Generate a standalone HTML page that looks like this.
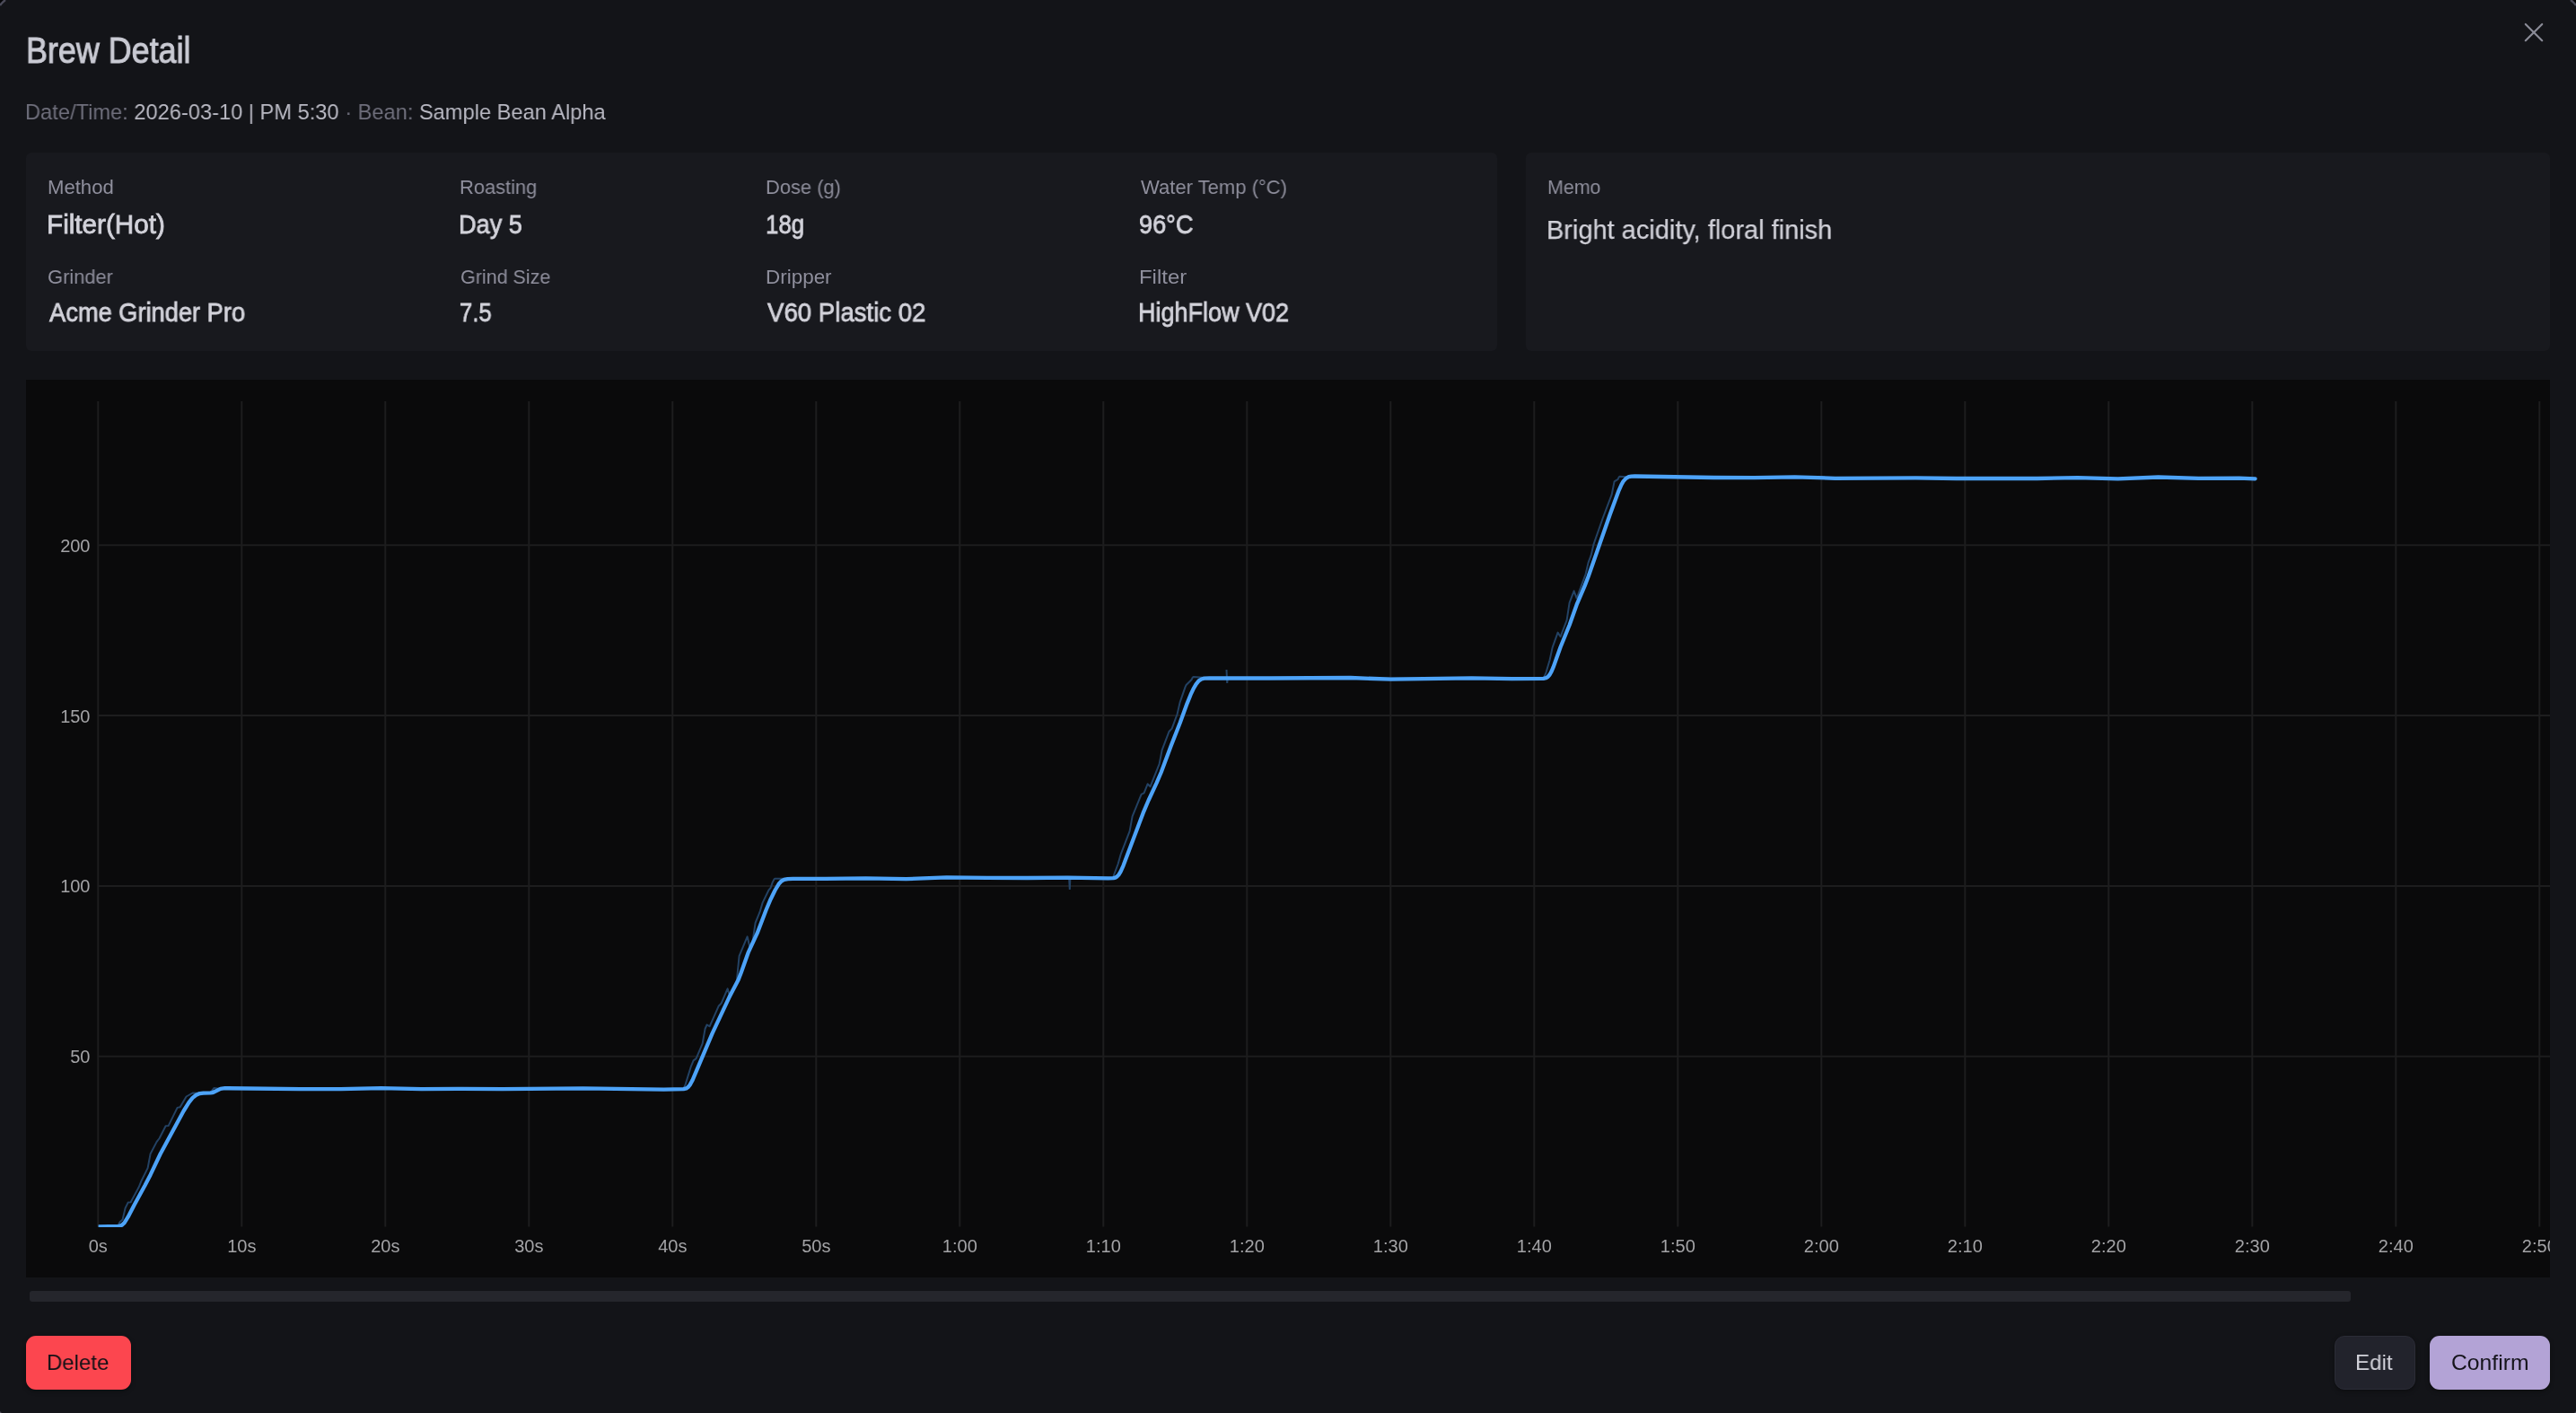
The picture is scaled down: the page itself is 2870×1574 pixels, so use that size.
<!DOCTYPE html>
<html><head><meta charset="utf-8"><style>
html,body{margin:0;padding:0;}
body{width:2870px;height:1574px;background:#131418;position:relative;overflow:hidden;font-family:"Liberation Sans",sans-serif;}
.t{position:absolute;white-space:nowrap;line-height:1;transform-origin:0 50%;will-change:transform;}
.card{position:absolute;background:#18191e;border-radius:6px;}
.chartbg{position:absolute;left:29px;top:423px;width:2812px;height:999.5px;background:#0a0a0b;}
.chart{position:absolute;left:0;top:0;}
.scroll{position:absolute;left:33px;top:1438px;width:2586px;height:12px;background:#25262c;border-radius:3px;}
.btn{position:absolute;top:1488px;height:60px;border-radius:11px;box-sizing:border-box;box-shadow:0 2px 5px rgba(0,0,0,0.35);}
</style></head><body>
<div class="card" style="left:29px;top:170px;width:1639.3px;height:220.8px"></div>
<div class="card" style="left:1700.2px;top:170px;width:1140.8px;height:220.8px"></div>
<div class="chartbg"></div>
<div class="scroll"></div>
<div class="btn" style="left:29px;width:117px;background:#fc464f"></div>
<div class="btn" style="left:2601.2px;width:89.4px;background:#22232c;border:1.5px solid #2b2c36"></div>
<div class="btn" style="left:2707px;width:134px;background:#b3a3d6"></div>
<svg class="chart" style="will-change:transform" width="2870" height="1574" viewBox="0 0 2870 1574">
<defs><clipPath id="cc"><rect x="29" y="423" width="2812" height="999.5"/></clipPath></defs>
<g clip-path="url(#cc)">
<g stroke="#1d1d1e" stroke-width="2" fill="none"><line x1="109.3" y1="447" x2="109.3" y2="1366.5"/><line x1="269.3" y1="447" x2="269.3" y2="1366.5"/><line x1="429.3" y1="447" x2="429.3" y2="1366.5"/><line x1="589.3" y1="447" x2="589.3" y2="1366.5"/><line x1="749.3" y1="447" x2="749.3" y2="1366.5"/><line x1="909.3" y1="447" x2="909.3" y2="1366.5"/><line x1="1069.3" y1="447" x2="1069.3" y2="1366.5"/><line x1="1229.3" y1="447" x2="1229.3" y2="1366.5"/><line x1="1389.3" y1="447" x2="1389.3" y2="1366.5"/><line x1="1549.3" y1="447" x2="1549.3" y2="1366.5"/><line x1="1709.3" y1="447" x2="1709.3" y2="1366.5"/><line x1="1869.3" y1="447" x2="1869.3" y2="1366.5"/><line x1="2029.3" y1="447" x2="2029.3" y2="1366.5"/><line x1="2189.3" y1="447" x2="2189.3" y2="1366.5"/><line x1="2349.3" y1="447" x2="2349.3" y2="1366.5"/><line x1="2509.3" y1="447" x2="2509.3" y2="1366.5"/><line x1="2669.3" y1="447" x2="2669.3" y2="1366.5"/><line x1="2829.3" y1="447" x2="2829.3" y2="1366.5"/><line x1="109.3" y1="1176.7" x2="2841" y2="1176.7"/><line x1="109.3" y1="986.9" x2="2841" y2="986.9"/><line x1="109.3" y1="797.1" x2="2841" y2="797.1"/><line x1="109.3" y1="607.3" x2="2841" y2="607.3"/></g>
<g fill="#a3a3a6" font-family="Liberation Sans, sans-serif" font-size="20px"><text x="109.3" y="1395" text-anchor="middle">0s</text><text x="269.3" y="1395" text-anchor="middle">10s</text><text x="429.3" y="1395" text-anchor="middle">20s</text><text x="589.3" y="1395" text-anchor="middle">30s</text><text x="749.3" y="1395" text-anchor="middle">40s</text><text x="909.3" y="1395" text-anchor="middle">50s</text><text x="1069.3" y="1395" text-anchor="middle">1:00</text><text x="1229.3" y="1395" text-anchor="middle">1:10</text><text x="1389.3" y="1395" text-anchor="middle">1:20</text><text x="1549.3" y="1395" text-anchor="middle">1:30</text><text x="1709.3" y="1395" text-anchor="middle">1:40</text><text x="1869.3" y="1395" text-anchor="middle">1:50</text><text x="2029.3" y="1395" text-anchor="middle">2:00</text><text x="2189.3" y="1395" text-anchor="middle">2:10</text><text x="2349.3" y="1395" text-anchor="middle">2:20</text><text x="2509.3" y="1395" text-anchor="middle">2:30</text><text x="2669.3" y="1395" text-anchor="middle">2:40</text><text x="2829.3" y="1395" text-anchor="middle">2:50</text><text x="100.5" y="1184.1" text-anchor="end">50</text><text x="100.5" y="994.3" text-anchor="end">100</text><text x="100.5" y="804.5" text-anchor="end">150</text><text x="100.5" y="614.7" text-anchor="end">200</text></g>
<clipPath id="lc"><rect x="109.6" y="423" width="2732" height="944.1"/></clipPath>
<g clip-path="url(#lc)">
<path d="M109.6,1366.5 L130.6,1366.5 L133.6,1361.2 L136.6,1358.4 L139.6,1345.7 L142.6,1339.6 L145.6,1339.2 L154.6,1322.6 L157.6,1315.2 L164.6,1301.1 L167.6,1285.2 L174.6,1271.9 L177.6,1268.0 L184.6,1254.2 L187.6,1254.1 L197.6,1233.9 L200.6,1233.2 L207.6,1221.5 L214.6,1217.5 L233.6,1218.0 L238.6,1211.9 L245.6,1213.0 L761.6,1213.1 L763.6,1208.1 L769.6,1188.7 L772.6,1181.4 L775.6,1179.1 L782.6,1162.7 L785.6,1146.0 L787.6,1141.5 L790.6,1143.3 L800.6,1120.8 L803.6,1117.6 L810.6,1101.4 L813.6,1111.0 L820.6,1094.8 L823.6,1064.9 L832.6,1043.3 L835.6,1055.9 L838.6,1048.5 L841.6,1028.0 L846.6,1015.7 L849.6,1005.6 L856.6,991.3 L858.6,989.0 L860.6,983.1 L862.6,979.3 L863.6,978.7 L1239.6,978.5 L1245.6,962.5 L1248.6,951.9 L1258.6,925.9 L1261.6,909.4 L1271.6,884.8 L1274.6,883.3 L1278.6,873.3 L1281.6,876.2 L1291.6,851.1 L1294.6,835.7 L1302.6,814.7 L1305.6,811.6 L1311.6,795.5 L1314.6,782.4 L1320.6,765.1 L1321.6,763.0 L1327.6,757.0 L1328.6,754.9 L1329.6,754.1 L1340.6,754.8 L1719.6,756.2 L1722.6,748.8 L1726.6,735.2 L1729.6,721.4 L1735.6,704.6 L1738.6,709.2 L1745.6,690.9 L1748.6,671.4 L1753.6,658.3 L1756.6,666.5 L1766.6,639.6 L1769.6,626.7 L1772.6,618.7 L1775.6,606.1 L1785.6,577.5 L1795.6,551.2 L1798.6,536.4 L1802.6,533.8 L1803.6,531.6 L1804.6,530.7 L1815.6,531.5 L2512.6,533.3" fill="none" stroke="#234264" stroke-width="2" stroke-linejoin="round"/>
<path d="M1191,976 L1191.8,991 L1192.4,978 M1366.5,746 L1367.2,761 L1368,754" fill="none" stroke="#234264" stroke-width="2"/>
<path d="M109.6,1366.5 L132.6,1365.9 L135.6,1364.8 L138.6,1362.1 L142.6,1355.7 L149.6,1342.2 L161.6,1320.3 L167.6,1308.7 L178.6,1285.5 L204.6,1237.5 L210.6,1227.9 L214.6,1222.9 L218.6,1219.7 L222.6,1218.1 L226.6,1217.6 L234.6,1217.4 L236.6,1217.1 L238.6,1216.4 L245.6,1212.8 L250.6,1212.2 L334.6,1213.2 L379.6,1213.2 L424.6,1212.2 L469.6,1213.1 L514.6,1212.9 L559.6,1213.1 L649.6,1212.4 L739.6,1213.7 L761.6,1213.1 L764.6,1212.4 L766.6,1211.0 L768.6,1208.6 L771.6,1203.1 L793.6,1151.2 L812.6,1110.6 L822.6,1091.5 L825.6,1083.8 L833.6,1061.2 L843.6,1039.7 L853.6,1013.5 L858.6,1001.7 L863.6,991.5 L867.6,984.8 L870.6,981.5 L873.6,979.9 L877.6,979.1 L883.6,978.8 L919.6,978.8 L964.6,978.3 L1009.6,979.2 L1054.6,977.3 L1099.6,977.9 L1144.6,978.0 L1189.6,977.6 L1234.6,978.3 L1240.6,978.2 L1242.6,977.7 L1244.6,976.4 L1246.6,974.2 L1248.6,970.8 L1251.6,964.1 L1273.6,905.7 L1279.6,891.5 L1288.6,872.2 L1293.6,860.5 L1304.6,831.1 L1314.6,805.5 L1322.6,783.6 L1326.6,773.7 L1329.6,767.3 L1332.6,762.1 L1335.6,758.4 L1338.6,756.5 L1341.6,755.7 L1347.6,755.5 L1414.6,755.5 L1504.6,755.0 L1549.6,756.7 L1639.6,755.3 L1684.6,756.1 L1719.6,755.8 L1722.6,755.2 L1724.6,753.9 L1726.6,751.5 L1728.6,747.9 L1730.6,743.2 L1738.6,720.8 L1748.6,696.3 L1756.6,673.7 L1765.6,652.6 L1769.6,642.3 L1793.6,573.5 L1803.6,546.3 L1806.6,539.6 L1808.6,536.2 L1811.6,532.8 L1814.6,531.2 L1817.6,530.7 L1821.6,530.5 L1909.6,532.0 L1954.6,532.2 L1999.6,531.4 L2044.6,532.8 L2134.6,532.3 L2179.6,533.0 L2269.6,533.0 L2314.6,532.2 L2359.6,533.4 L2404.6,531.5 L2449.6,532.8 L2494.6,532.7 L2512.6,533.3" fill="none" stroke="#4da3f8" stroke-width="4.3" stroke-linejoin="round" stroke-linecap="round"/>
</g></g>
<path d="M-1,-1 L7,-1 L6,0 A24,24 0 0 0 0,6 L-1,7 Z" fill="#050507"/><path d="M2871,-1 L2863,-1 L2864,0 A24,24 0 0 1 2870,6 L2871,7 Z" fill="#050507"/>
<circle cx="0.2" cy="1573.8" r="1.3" fill="#4b4b59"/><circle cx="2869.8" cy="1573.8" r="1.3" fill="#4b4b59"/>
<g fill="none" stroke="#4b4b59" stroke-width="2.4"><path d="M0,6 A24,24 0 0 1 6,0"/><path d="M2864,0 A24,24 0 0 1 2870,6"/></g>
<g stroke="#8a8b97" stroke-width="2.2" stroke-linecap="round"><line x1="2813.8" y1="27" x2="2832.2" y2="45.2"/><line x1="2832.2" y1="27" x2="2813.8" y2="45.2"/></g>
</svg>
<div id="title" class="t" style="left:29.25px;top:36.69px;font-size:39.83px;font-weight:400;color:#c9cad3;transform:scaleX(0.9010);-webkit-text-stroke:1.0px #c9cad3">Brew Detail</div><div id="sub" class="t" style="left:28.09px;top:112.58px;font-size:24.71px;font-weight:400;color:#b9b9c3;transform:scaleX(0.9570)"><span style="color:#6f6f7c">Date/Time:</span> 2026-03-10 | PM 5:30 <span style="color:#6f6f7c">· Bean:</span> Sample Bean Alpha</div><div id="m_l" class="t" style="left:53.00px;top:198.10px;font-size:22.09px;font-weight:400;color:#8f8f9d;transform:scaleX(1.0017)">Method</div><div id="m_v" class="t" style="left:51.90px;top:235.69px;font-size:29.07px;font-weight:400;color:#d2d2da;transform:scaleX(1.0212);-webkit-text-stroke:0.8px #d2d2da">Filter(Hot)</div><div id="r_l" class="t" style="left:511.83px;top:198.10px;font-size:22.09px;font-weight:400;color:#8f8f9d;transform:scaleX(0.9910)">Roasting</div><div id="r_v" class="t" style="left:510.91px;top:235.69px;font-size:29.07px;font-weight:400;color:#d2d2da;transform:scaleX(0.9332);-webkit-text-stroke:0.8px #d2d2da">Day 5</div><div id="d_l" class="t" style="left:852.80px;top:198.10px;font-size:22.09px;font-weight:400;color:#8f8f9d;transform:scaleX(0.9908)">Dose (g)</div><div id="d_v" class="t" style="left:852.91px;top:235.69px;font-size:29.07px;font-weight:400;color:#d2d2da;transform:scaleX(0.8891);-webkit-text-stroke:0.8px #d2d2da">18g</div><div id="w_l" class="t" style="left:1271.18px;top:198.10px;font-size:22.09px;font-weight:400;color:#8f8f9d;transform:scaleX(0.9973)">Water Temp (°C)</div><div id="w_v" class="t" style="left:1269.20px;top:235.69px;font-size:29.07px;font-weight:400;color:#d2d2da;transform:scaleX(0.9307);-webkit-text-stroke:0.8px #d2d2da">96°C</div><div id="g_l" class="t" style="left:53.00px;top:297.90px;font-size:22.09px;font-weight:400;color:#8f8f9d;transform:scaleX(0.9901)">Grinder</div><div id="g_v" class="t" style="left:55.00px;top:333.59px;font-size:29.07px;font-weight:400;color:#d2d2da;transform:scaleX(0.9377);-webkit-text-stroke:0.8px #d2d2da">Acme Grinder Pro</div><div id="gs_l" class="t" style="left:512.78px;top:297.90px;font-size:22.09px;font-weight:400;color:#8f8f9d;transform:scaleX(0.9744)">Grind Size</div><div id="gs_v" class="t" style="left:511.84px;top:333.59px;font-size:29.07px;font-weight:400;color:#d2d2da;transform:scaleX(0.8838);-webkit-text-stroke:0.8px #d2d2da">7.5</div><div id="dr_l" class="t" style="left:852.77px;top:297.90px;font-size:22.09px;font-weight:400;color:#8f8f9d;transform:scaleX(1.0165)">Dripper</div><div id="dr_v" class="t" style="left:854.71px;top:333.59px;font-size:29.07px;font-weight:400;color:#d2d2da;transform:scaleX(0.9497);-webkit-text-stroke:0.8px #d2d2da">V60 Plastic 02</div><div id="f_l" class="t" style="left:1269.07px;top:297.90px;font-size:22.09px;font-weight:400;color:#8f8f9d;transform:scaleX(1.0837)">Filter</div><div id="f_v" class="t" style="left:1268.29px;top:333.59px;font-size:29.07px;font-weight:400;color:#d2d2da;transform:scaleX(0.9289);-webkit-text-stroke:0.8px #d2d2da">HighFlow V02</div><div id="memo_l" class="t" style="left:1724.27px;top:198.30px;font-size:22.09px;font-weight:400;color:#8f8f9d;transform:scaleX(0.9689)">Memo</div><div id="memo_v" class="t" style="left:1723.25px;top:241.28px;font-size:29.80px;font-weight:400;color:#d0d0d8;transform:scaleX(0.9722);-webkit-text-stroke:0.25px #d0d0d8">Bright acidity, floral finish</div><div id="del" class="t" style="left:51.85px;top:1505.58px;font-size:24.71px;font-weight:400;color:#131116;transform:scaleX(0.9710)">Delete</div><div id="edit" class="t" style="left:2624.00px;top:1505.58px;font-size:24.71px;font-weight:400;color:#d4d4dc;transform:scaleX(0.9768)">Edit</div><div id="conf" class="t" style="left:2730.78px;top:1505.58px;font-size:24.71px;font-weight:400;color:#15141b;transform:scaleX(1.0001)">Confirm</div>
</body></html>
